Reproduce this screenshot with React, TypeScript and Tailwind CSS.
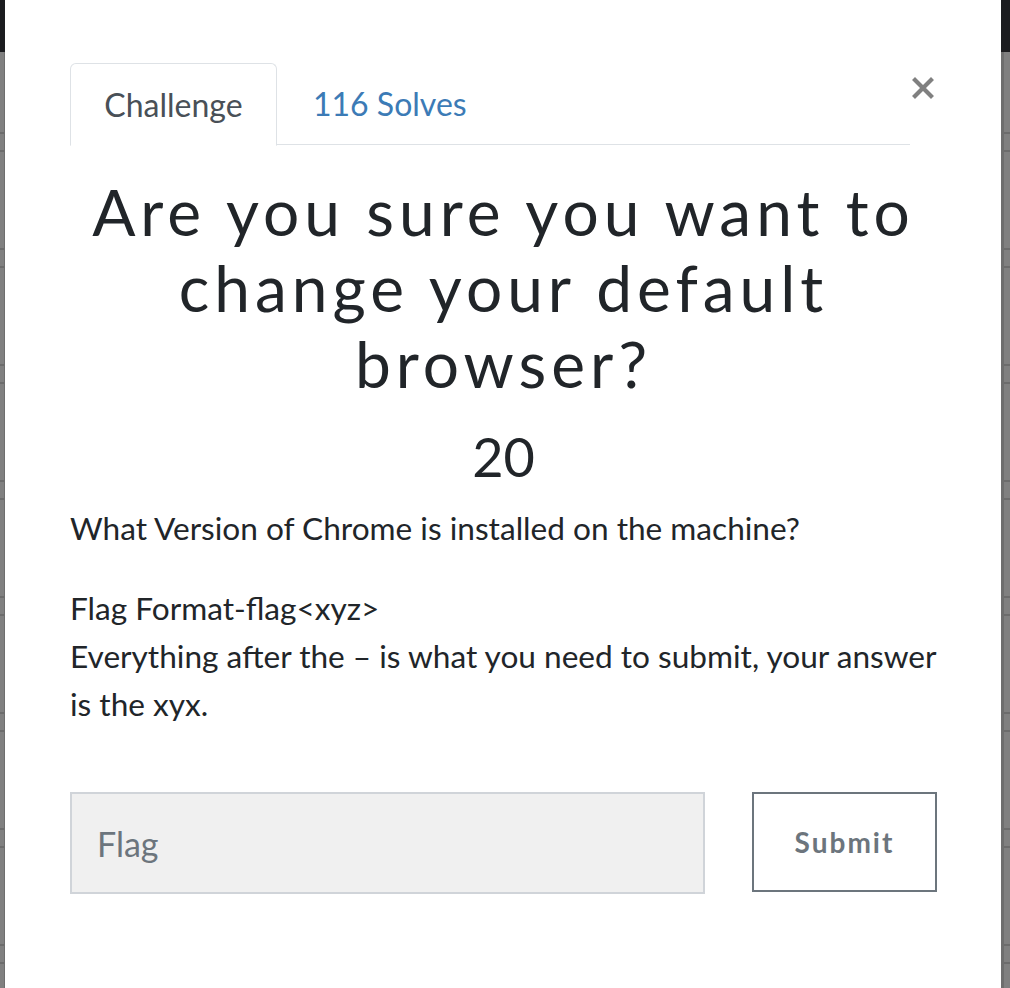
import React from "react";

function Strip({ side }: { side: "left" | "right" }) {
  const periods = [0, 1, 2, 3, 4, 5, 6, 7];
  return (
    <div className={side === "left" ? "w-[5px] flex flex-col shrink-0" : "w-[9px] flex flex-col shrink-0"}>
      <div className="h-[52px] bg-[#1b1c1f] shrink-0" />
      <div
        className={
          side === "left"
            ? "flex-1 bg-[#808080] border-r border-[#6e6e6e] flex flex-col"
            : "flex-1 bg-[#808080] border-l-[3px] border-[#6e6e6e] flex flex-col"
        }
      >
        <div className="h-[80px] shrink-0" />
        {periods.map((k) => (
          <React.Fragment key={k}>
            <div className="h-[2px] bg-[#6c6c6c] shrink-0" />
            <div className="h-[16px] shrink-0" />
            <div className="h-[2px] bg-[#6c6c6c] shrink-0" />
            <div className="h-[96px] shrink-0" />
          </React.Fragment>
        ))}
      </div>
    </div>
  );
}

export default function App() {
  return (
    <div className="flex h-[988px] w-[1010px] overflow-hidden bg-white" style={{ fontFamily: "Lato, 'Liberation Sans', sans-serif" }}>
      <Strip side="left" />
      <div className="flex-1 bg-white pt-[63px] pl-[65px] pr-[64px]">
        <div className="flex items-start">
          <ul className="flex flex-1 border-b border-[#dee2e6] h-[82px]">
            <li className="w-[207px] h-[83px] border border-[#dee2e6] border-b-white rounded-t-[6px] bg-white flex items-center justify-center text-[32px] text-[#495057]">
              Challenge
            </li>
            <li className="pl-[36px] h-[82px] flex items-center text-[32px] text-[#3c7bb6]">116 Solves</li>
          </ul>
          <button className="mt-[14px] ml-[2px] mr-[3px] w-[22px] h-[22px] flex items-center justify-center">
            <svg width="22" height="22" viewBox="0 0 22 22">
              <path d="M3 3 L19 19 M19 3 L3 19" stroke="#808080" strokeWidth="4.2" strokeLinecap="square" fill="none" />
            </svg>
          </button>
        </div>

        <h2 className="mt-[29px] text-center text-[64px] leading-[76px] font-normal text-[#212529] tracking-[5px]">
          Are you sure you want to
          <br />
          change your default
          <br />
          browser?
        </h2>
        <h3 className="mt-[20px] text-center text-[54px] leading-[70px] text-[#212529]">20</h3>

        <div className="mt-[12px] text-[31.6px] leading-[48px] text-[#212529]">
          <p>What Version of Chrome is installed on the machine?</p>
          <p className="mt-[32px]">
            Flag Format-flag&lt;xyz&gt;
            <br />
            Everything after the – is what you need to submit, your answer
            <br />
            is the xyx.
          </p>
        </div>

        <div className="mt-[64px] flex items-start">
          <input
            className="w-[635px] h-[102px] bg-[#f0f0f0] border-2 border-[#d0d4d9] pl-[25px] text-[34px] text-[#495057] placeholder:text-[#6c757d] outline-none"
            placeholder="Flag"
          />
          <button className="ml-auto w-[185px] h-[100px] border-2 border-[#6c757d] text-[#6c757d] text-[28px] font-bold tracking-[2px] bg-white">
            Submit
          </button>
        </div>
      </div>
      <Strip side="right" />
    </div>
  );
}
